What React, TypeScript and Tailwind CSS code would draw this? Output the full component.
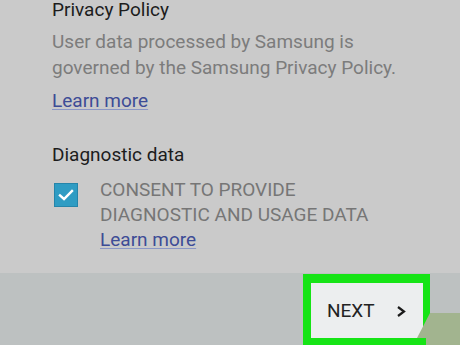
import React from "react";

export default function App() {
  return (
    <div
      className="relative w-[460px] h-[345px] overflow-hidden bg-[#cacaca] flex flex-col"
      style={{ fontFamily: "Roboto, 'Liberation Sans', sans-serif" }}
    >
      <div className="flex-1 pl-[52px] pt-[2px] flex flex-col">
        <div className="text-[19px] leading-[16px] text-[#1c1c1c]">Privacy Policy</div>
        <div className="mt-[11px] text-[19px] leading-[26px] text-[#7c7c7c]">
          <div>User data processed by Samsung is</div>
          <div>governed by the Samsung Privacy Policy.</div>
        </div>
        <div className="mt-[7px] text-[19px] leading-[26px] text-[#3d4c96] underline decoration-[#8b97c6] underline-offset-[2px]">
          Learn more
        </div>
        <div className="mt-[31px] text-[19px] leading-[20px] text-[#1c1c1c]">Diagnostic data</div>
        <div className="mt-[12px] flex">
          <div className="mt-[6px] ml-[2px] w-[24px] h-[24px] bg-[#2f9cc3] border border-[#2585aa] flex items-center justify-center">
            <svg width="18" height="18" viewBox="0 0 18 18">
              <polyline points="3,9.5 7,13 15,5" fill="none" stroke="#ffffff" strokeWidth="2.4" strokeLinecap="square" />
            </svg>
          </div>
          <div className="ml-[22px] text-[19px] leading-[25px] text-[#767676]">
            <div>CONSENT TO PROVIDE</div>
            <div>DIAGNOSTIC AND USAGE DATA</div>
            <div className="text-[#3d4c96] underline decoration-[#8b97c6] underline-offset-[2px]">Learn more</div>
          </div>
        </div>
      </div>
      <div className="h-[72px] bg-[#bdc1c1] flex justify-end">
        <div className="mt-[1px] mr-[30px] w-[127px] h-[71px] border-l-8 border-t-[9px] border-r-[7px] border-b-[7px] border-[#16e416] bg-[#eceeef] flex items-start pl-[16px] pt-[17px]">
          <span className="text-[19px] leading-[22px] text-[#222222]">NEXT</span>
          <svg className="ml-[21px] mt-[6px]" width="10" height="11" viewBox="0 0 10 11">
            <polyline points="2,1 8,5.5 2,10" fill="none" stroke="#1a1a1a" strokeWidth="2.2" />
          </svg>
        </div>
      </div>
      <svg className="absolute left-0 top-0" width="460" height="345" viewBox="0 0 460 345" style={{ pointerEvents: "none" }}>
        <polygon points="430,313 460,313 460,345 426,345 426,338 417,338" fill="#a2b48f" />
      </svg>
    </div>
  );
}
